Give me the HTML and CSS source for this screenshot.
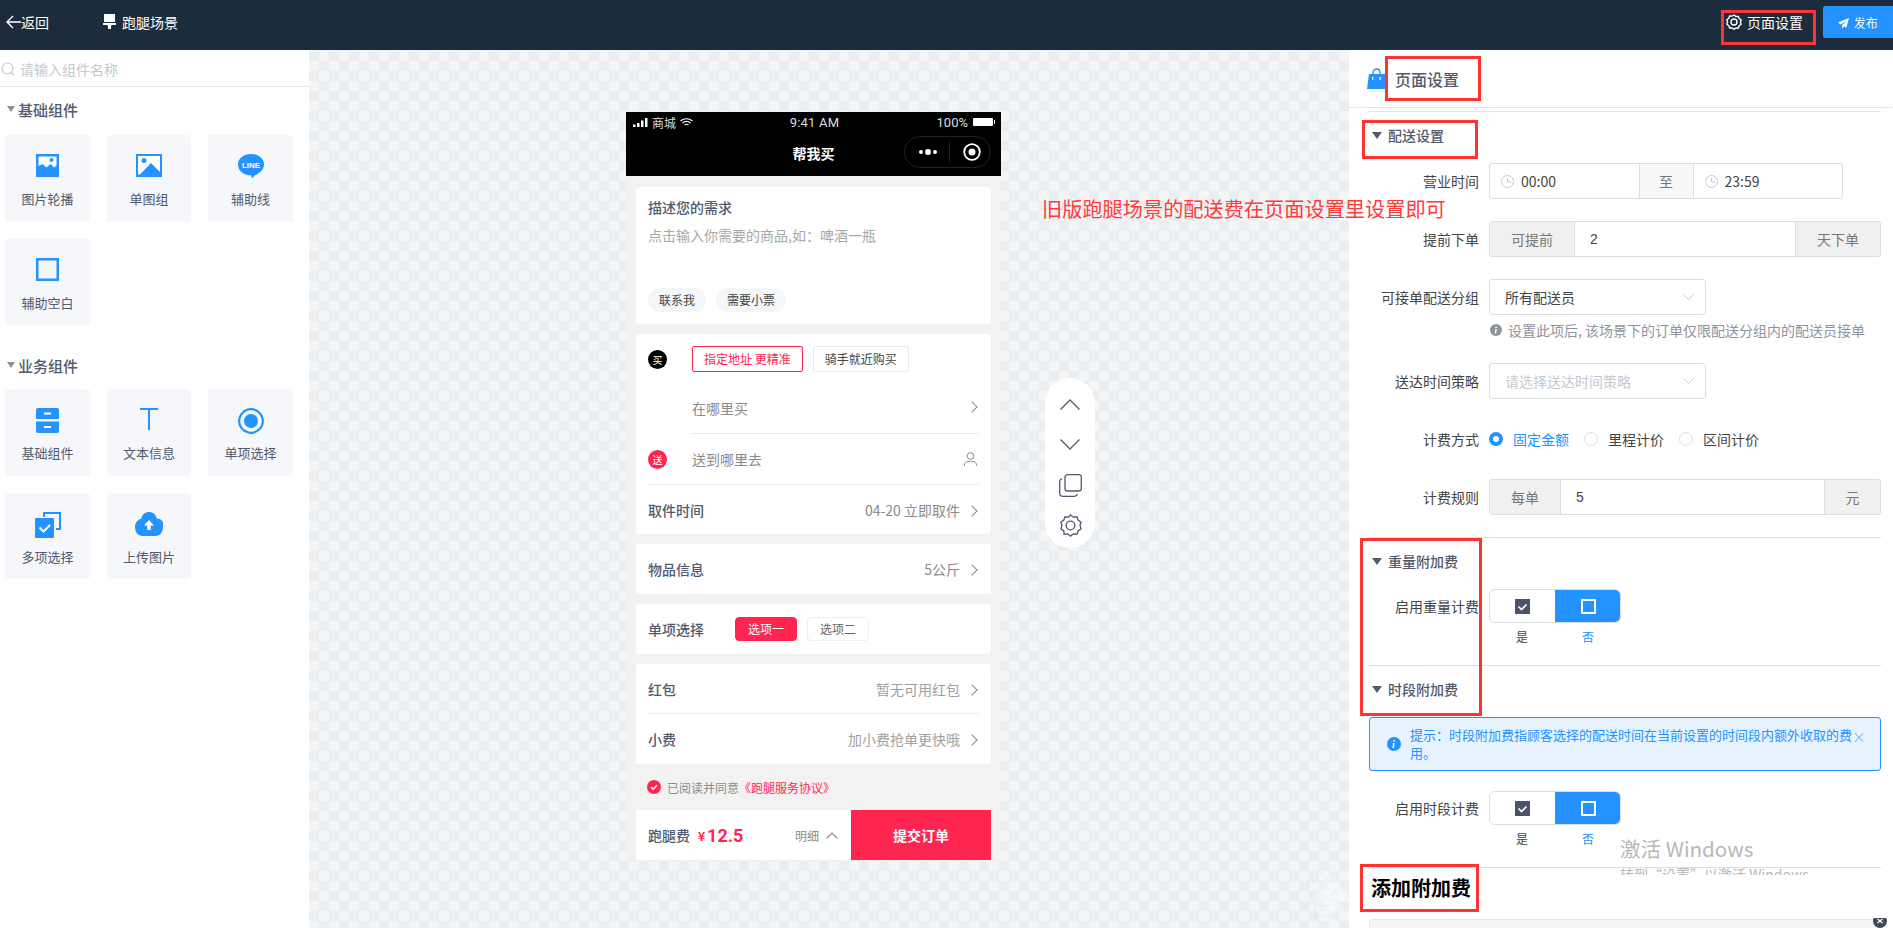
FILE: index.html

```html
<!DOCTYPE html>
<html lang="zh-CN">
<head>
  <meta charset="UTF-8">
  <title>跑腿场景 - 页面设置</title>
  <link rel="stylesheet" href="styles.css">
</head>
<body>
  <header class="topbar">
    <div class="back">
      <svg width="15" height="14" viewBox="0 0 15 14" fill="none" stroke="#fff" stroke-width="1.4"><path d="M7 1 1 7l6 6M1 7h14"/></svg>
      <span>返回</span>
    </div>
    <div class="scene">
      <svg width="13" height="16" viewBox="0 0 13 16" fill="#fff"><path d="M1 0h11v8H1zM0 9h13v2H9l-1 1v3H5v-3l-1-1H0z"/></svg>
      <span>跑腿场景</span>
    </div>
    <div class="topbar-right">
      <div class="page-set">
        <svg width="16" height="16" viewBox="0 0 24 24" fill="none" stroke="#fff" stroke-width="2"><path d="M12 1.500l3 2.200 3.600-.2 1.200 3.400 3 2.100L21.700 12l1.100 3.500-3 2.100-1.200 3.400-3.600-.2-3 2.200-3-2.200-3.600.2-1.200-3.400-3-2.100L2.300 12 1.200 8.500l3-2.100 1.200-3.400 3.600.2z"/><circle cx="12" cy="12" r="4.500"/></svg>
        <span>页面设置</span>
      </div>
      <button class="publish">
        <svg width="11" height="11" viewBox="0 0 12 12" fill="#fff"><path d="M12 0 0 5l3 2 6-4-4.500 5v4l2-3 2.500 1.500z"/></svg>
        发布
      </button>
    </div>
  </header>

  <main class="main">
    <aside class="left">
      <div class="search">
        <svg width="14" height="14" viewBox="0 0 14 14" fill="none" stroke="#c5c8ce" stroke-width="1.200"><circle cx="6.500" cy="6.500" r="5.500"/><path d="m10.500 10.500 2.500 2.500"/></svg>
        <span>请输入组件名称</span>
      </div>

      <h3 class="group-title first"><i class="tri grey"></i>基础组件</h3>
      <div class="comp-grid">
        <div class="comp">
          <svg width="23" height="23" viewBox="0 0 23 23"><path fill="#2492ff" d="M0 0h23v23H0z"/><path fill="#fff" d="M2.500 2.500h18v9l-2.500 2-3.500-3.500-4 3.500-4-3.500-4 2z"/><circle cx="15.500" cy="6" r="2" fill="#2492ff"/></svg>
          <span>图片轮播</span>
        </div>
        <div class="comp">
          <svg width="26" height="23" viewBox="0 0 26 23"><path fill="#2492ff" d="M0 0h26v23H0z"/><path fill="#fff" d="M2 2h22v16l-9-9-4 1-9 9z"/><path fill="#fff" d="M2 19 13 8l1.500 1.500L4 20.500H2z"/><circle cx="8" cy="6.500" r="2.500" fill="#2492ff"/></svg>
          <span>单图组</span>
        </div>
        <div class="comp">
          <svg width="26" height="25" viewBox="0 0 26 25"><path fill="#2492ff" d="M13 0c7.200 0 13 4.600 13 10.400 0 5.600-5.500 9.200-9.500 11.200l-2.500 3-1-3.300C6 21.300 0 16.800 0 10.400 0 4.600 5.800 0 13 0z"/><text x="13" y="14" class="line-txt">LINE</text></svg>
          <span>辅助线</span>
        </div>
        <div class="comp">
          <svg width="23" height="23" viewBox="0 0 23 23" fill="none" stroke="#2492ff" stroke-width="2.500"><path d="M1.250 1.250h20.500v20.500H1.250z"/></svg>
          <span>辅助空白</span>
        </div>
      </div>

      <h3 class="group-title"><i class="tri grey"></i>业务组件</h3>
      <div class="comp-grid">
        <div class="comp">
          <svg width="23" height="25" viewBox="0 0 23 25" fill="#2492ff"><path d="M2 0h19a2 2 0 0 1 2 2v9H0V2a2 2 0 0 1 2-2zM0 13.500h23V23a2 2 0 0 1-2 2H2a2 2 0 0 1-2-2z"/><path fill="#fff" d="M8 4.500h7v2H8zM8 18h7v2H8z"/></svg>
          <span>基础组件</span>
        </div>
        <div class="comp">
          <svg width="18" height="22" viewBox="0 0 18 22" fill="#2492ff"><path d="M0 0h18v2H10v20H8V2H0z"/></svg>
          <span>文本信息</span>
        </div>
        <div class="comp">
          <svg width="26" height="26" viewBox="0 0 26 26"><circle cx="13" cy="13" r="11.800" fill="none" stroke="#2492ff" stroke-width="2.200"/><circle cx="13" cy="13" r="7" fill="#2492ff"/></svg>
          <span>单项选择</span>
        </div>
        <div class="comp">
          <svg width="26" height="26" viewBox="0 0 26 26" fill="#2492ff"><path d="M8 0h18v18h-5v-2h3V2H10v3H8z"/><path d="M1 6h17a1 1 0 0 1 1 1v18a1 1 0 0 1-1 1H1a1 1 0 0 1-1-1V7a1 1 0 0 1 1-1z"/><path d="m4.500 15.500 4 4 6.500-6.500" fill="none" stroke="#fff" stroke-width="2"/></svg>
          <span>多项选择</span>
        </div>
        <div class="comp">
          <svg width="28" height="24" viewBox="0 0 28 24" fill="#2492ff"><path d="M14 0c4 0 7 2.500 7.600 6.400A6.500 6.500 0 0 1 28 15c0 5-3 9-7.500 9h-13C3 24 0 20 0 15c0-3.800 2.500-7.500 6.400-8.600C7 2.500 10 0 14 0z"/><path d="M14 8l5 5.500h-3.200V18h-3.600v-4.500H9z" fill="#fff"/></svg>
          <span>上传图片</span>
        </div>
      </div>
    </aside>

    <section class="canvas">
      <div class="phone">
        <div class="phone-head">
          <div class="status">
            <div class="status-left">
              <svg width="15" height="9" viewBox="0 0 15 9" fill="#fff"><path d="M0 6.500h2.500V9H0zM4 5h2.500v4H4zM8 2.500h2.500V9H8zM12 0h2.500v9H12z"/></svg>
              <span>商城</span>
              <svg width="13" height="9" viewBox="0 0 13 9" fill="none" stroke="#fff" stroke-width="1.200"><path d="M.5 3c3.500-3 8.500-3 12 0M2.500 5c2.500-2 5.500-2 8 0M4.500 7c1.200-.9 2.800-.9 4 0"/></svg>
            </div>
            <div class="status-time">9:41 AM</div>
            <div class="status-right">
              <span>100%</span>
              <i class="battery"></i>
            </div>
          </div>
          <div class="nav">
            <div class="nav-title">帮我买</div>
            <div class="capsule">
              <svg width="20" height="6" viewBox="0 0 20 6" fill="#fff"><circle cx="3" cy="3" r="2"/><circle cx="10" cy="3" r="3"/><circle cx="17" cy="3" r="2"/></svg>
              <i class="capsule-line"></i>
              <svg width="18" height="18" viewBox="0 0 18 18"><circle cx="9" cy="9" r="7.800" fill="none" stroke="#fff" stroke-width="1.800"/><circle cx="9" cy="9" r="3.500" fill="#fff"/></svg>
            </div>
          </div>
        </div>

        <div class="phone-body">
          <div class="card need">
            <div class="need-title">描述您的需求</div>
            <div class="need-hint">点击输入你需要的商品,如：啤酒一瓶</div>
            <div class="chips">
              <span class="chip">联系我</span>
              <span class="chip">需要小票</span>
            </div>
          </div>

          <div class="card addr">
            <div class="addr-top">
              <span class="badge black">买</span>
              <span class="tag red">指定地址 更精准</span>
              <span class="tag">骑手就近购买</span>
            </div>
            <div class="addr-row">
              <span class="muted">在哪里买</span>
              <i class="arrow"></i>
            </div>
            <div class="addr-send">
              <span class="badge pink">送</span>
              <span class="muted">送到哪里去</span>
              <svg width="13" height="14" viewBox="0 0 13 14" fill="none" stroke="#8a8a8a"><circle cx="6.500" cy="4" r="3.300"/><path d="M.5 14v-1.500c0-2 2-3.200 6-3.200s6 1.200 6 3.200V14"/></svg>
            </div>
            <div class="row last">
              <b>取件时间</b>
              <span class="row-val">04-20 立即取件<i class="arrow"></i></span>
            </div>
          </div>

          <div class="card plain square">
            <div class="row">
              <b>物品信息</b>
              <span class="row-val">5公斤<i class="arrow"></i></span>
            </div>
          </div>

          <div class="card plain">
            <div class="row choose">
              <b>单项选择</b>
              <span class="opt on">选项一</span>
              <span class="opt">选项二</span>
            </div>
          </div>

          <div class="card money">
            <div class="row line">
              <b>红包</b>
              <span class="row-val light">暂无可用红包<i class="arrow"></i></span>
            </div>
            <div class="row">
              <b>小费</b>
              <span class="row-val light">加小费抢单更快哦<i class="arrow"></i></span>
            </div>
          </div>

          <div class="agree">
            <svg width="14" height="14" viewBox="0 0 14 14"><circle cx="7" cy="7" r="7" fill="#ff2551"/><path d="m4 7 2.200 2.200L10 5.300" fill="none" stroke="#fff" stroke-width="1.500"/></svg>
            <span>已阅读并同意</span><span class="agree-link">《跑腿服务协议》</span>
          </div>

          <div class="pay">
            <div class="pay-left">
              <b>跑腿费</b>
              <span class="yen">¥</span><span class="price">12.5</span>
              <span class="detail">明细</span>
              <svg width="12" height="7" viewBox="0 0 12 7" fill="none" stroke="#8a8a8a" stroke-width="1.100"><path d="m.5 6.500 5.500-5.500 5.500 5.500"/></svg>
            </div>
            <div class="pay-btn">提交订单</div>
          </div>
        </div>
      </div>

      <div class="tools">
        <svg width="20" height="11" viewBox="0 0 20 11" fill="none" stroke="#515a6e" stroke-width="1.300"><path d="m.5 10.500 9.500-9.500 9.500 9.500"/></svg>
        <svg width="20" height="11" viewBox="0 0 20 11" fill="none" stroke="#515a6e" stroke-width="1.300"><path d="m.5.500 9.500 9.500 9.500-9.500"/></svg>
        <svg width="23" height="23" viewBox="0 0 23 23" fill="none" stroke="#515a6e" stroke-width="1.300"><rect x="6" y=".7" width="16.300" height="16.300" rx="2.500"/><path d="M3 4.500C1.500 5 .7 6 .7 7.500V19c0 2 1.300 3.300 3.300 3.300h11.500c1.500 0 2.500-.8 3-2.300"/></svg>
        <svg width="23" height="23" viewBox="0 0 24 24" fill="none" stroke="#515a6e" stroke-width="1.400"><path d="M12 1l3 2.300 3.700-.4 1.300 3.500 3 2.100L21.900 12l1.100 3.500-3 2.100-1.300 3.500-3.700-.4-3 2.300-3-2.300-3.700.4L5 17.600l-3-2.100L3.100 12 2 8.500l3-2.100 1.300-3.500 3.700.4z"/><circle cx="12" cy="12" r="4.500"/></svg>
      </div>
    </section>

    <aside class="right">
      <div class="right-head">
        <svg width="19" height="21" viewBox="0 0 19 21"><path fill="#2492ff" d="M2 6h17v15H0z"/><path fill="none" stroke="#2492ff" stroke-width="1.300" d="M6 6V4.500C6 2.500 7.500 1 9.500 1S13 2.500 13 4.500V6"/><path fill="#fff" d="M5 9h1.300v3H5zM12.500 9h1.300v3h-1.300z"/></svg>
        <span>页面设置</span>
      </div>
      <div class="right-body">
        <h4 class="sec-title"><i class="tri"></i>配送设置</h4>

        <div class="field">
          <label>营业时间</label>
          <div class="group narrow">
            <div class="time">
              <svg width="13" height="13" viewBox="0 0 13 13" fill="none" stroke="#c5c8ce"><circle cx="6.500" cy="6.500" r="6"/><path d="M6.500 3V7H10"/></svg>
              <span>00:00</span>
            </div>
            <div class="addon mid">至</div>
            <div class="time">
              <svg width="13" height="13" viewBox="0 0 13 13" fill="none" stroke="#c5c8ce"><circle cx="6.500" cy="6.500" r="6"/><path d="M6.500 3V7H10"/></svg>
              <span>23:59</span>
            </div>
          </div>
        </div>

        <div class="field">
          <label>提前下单</label>
          <div class="group">
            <div class="addon w84">可提前</div>
            <div class="group-input">2</div>
            <div class="addon w84">天下单</div>
          </div>
        </div>

        <div class="field short-gap">
          <label>可接单配送分组</label>
          <div class="select">
            <span>所有配送员</span>
            <svg width="11" height="6" viewBox="0 0 11 6" fill="none" stroke="#c5c8ce"><path d="m.5.500 5 5 5-5"/></svg>
          </div>
        </div>
        <div class="hint">
          <svg width="12" height="12" viewBox="0 0 12 12"><circle cx="6" cy="6" r="6" fill="#8f939c"/><path d="M5.400 2.500h1.500v1.400H5.400zM5.300 5h1.500l-.6 4.500H4.800z" fill="#fff"/></svg>
          <span>设置此项后, 该场景下的订单仅限配送分组内的配送员接单</span>
        </div>

        <div class="field before-radios">
          <label>送达时间策略</label>
          <div class="select">
            <span class="ph">请选择送达时间策略</span>
            <svg width="11" height="6" viewBox="0 0 11 6" fill="none" stroke="#c5c8ce"><path d="m.5.500 5 5 5-5"/></svg>
          </div>
        </div>

        <div class="field radios">
          <label>计费方式</label>
          <div class="radio-list">
            <span class="radio on"><i></i>固定金额</span>
            <span class="radio"><i></i>里程计价</span>
            <span class="radio"><i></i>区间计价</span>
          </div>
        </div>

        <div class="field">
          <label>计费规则</label>
          <div class="group">
            <div class="addon w70">每单</div>
            <div class="group-input">5</div>
            <div class="addon w55">元</div>
          </div>
        </div>

        <hr class="rule">
        <h4 class="sec-title"><i class="tri"></i>重量附加费</h4>
        <div class="field toggle-field">
          <label>启用重量计费</label>
          <div class="toggle-wrap">
            <div class="toggle">
              <div class="toggle-yes"><svg width="15" height="15" viewBox="0 0 15 15"><rect width="15" height="15" fill="#4b5368"/><path d="m3.500 7.500 3 3 5-5" fill="none" stroke="#fff" stroke-width="1.700"/></svg></div>
              <div class="toggle-no"><i></i></div>
            </div>
            <div class="toggle-text"><span>是</span><span class="blue">否</span></div>
          </div>
        </div>

        <hr class="rule spaced">
        <h4 class="sec-title"><i class="tri"></i>时段附加费</h4>
        <div class="alert">
          <svg width="14" height="14" viewBox="0 0 14 14"><circle cx="7" cy="7" r="7" fill="#2492ff"/><path d="M6.400 3h1.700v1.600H6.400zM6.100 6h1.700l-.8 5H5.300z" fill="#fff"/></svg>
          <p>提示：时段附加费指顾客选择的配送时间在当前设置的时间段内额外收取的费用。</p>
          <span class="alert-x">×</span>
        </div>
        <div class="field toggle-field">
          <label>启用时段计费</label>
          <div class="toggle-wrap">
            <div class="toggle">
              <div class="toggle-yes"><svg width="15" height="15" viewBox="0 0 15 15"><rect width="15" height="15" fill="#4b5368"/><path d="m3.500 7.500 3 3 5-5" fill="none" stroke="#fff" stroke-width="1.700"/></svg></div>
              <div class="toggle-no"><i></i></div>
            </div>
            <div class="toggle-text"><span>是</span><span class="blue">否</span></div>
          </div>
        </div>

        <hr class="rule spaced">
        <h2 class="add-title">添加附加费</h2>
        <div class="add-box"></div>
      </div>
    </aside>
  </main>

  <!-- 截图上的红色标注 -->
  <div class="mark mark-top"></div>
  <div class="mark mark-title"></div>
  <div class="mark mark-sec"></div>
  <div class="mark mark-tall"></div>
  <div class="mark mark-add"></div>
  <div class="note">旧版跑腿场景的配送费在页面设置里设置即可</div>

  <div class="winmark">
    <div class="win-big">激活 Windows</div>
    <div class="win-small">转到“设置”以激活 Windows</div>
  </div>
  <div class="ghost">客</div>
  <svg class="add-close" width="14" height="10" viewBox="0 4 14 10"><circle cx="7" cy="7" r="7" fill="#3f4a5a"/><path d="m4.500 5 5 4M9.500 5l-5 4" stroke="#fff" stroke-width="1.300"/></svg>
</body>
</html>
```

FILE: styles.css

```css
* {
  box-sizing: border-box;
}
html, body {
  margin: 0;
  height: 100%;
}
body {
  position: relative;
  width: 1893px;
  height: 928px;
  overflow: hidden;
  font-family: "Noto Sans CJK SC", "Noto Sans", sans-serif;
  font-size: 13px;
  color: #515a6e;
  background: #fff;
}
h2, h3, h4, p {
  margin: 0;
}
i {
  font-style: normal;
}

/* top bar */
.topbar {
  height: 50px;
  display: flex;
  align-items: center;
  background: #1d2c3d;
  color: #fff;
}
.back {
  display: flex;
  align-items: center;
  width: 103px;
  padding-left: 6px;
  font-size: 14px;
  margin-top: -7px;
}
.scene {
  display: flex;
  align-items: center;
  gap: 6px;
  font-size: 14px;
  margin-top: -7px;
}
.topbar-right {
  margin-left: auto;
  display: flex;
  align-items: flex-start;
  height: 50px;
  padding-top: 6px;
}
.page-set {
  display: flex;
  align-items: center;
  gap: 5px;
  height: 32px;
  margin-right: 20px;
  font-size: 14px;
}
.publish {
  width: 70px;
  height: 32px;
  border: none;
  border-radius: 2px 0 0 2px;
  background: #2492ff;
  color: #fff;
  font: inherit;
  font-size: 12px;
  padding: 0;
}
.publish svg {
  margin-right: 2px;
  vertical-align: -1px;
}

.main {
  display: flex;
  height: 878px;
}

/* left panel */
.left {
  width: 309px;
  flex: none;
  background: #fff;
}
.search {
  height: 37px;
  display: flex;
  align-items: center;
  gap: 5px;
  padding: 1px 0 0 1px;
  border-bottom: 1px solid #e3e5ec;
  color: #c5c8ce;
  font-size: 14px;
}
.group-title {
  display: flex;
  align-items: center;
  gap: 3px;
  height: 22px;
  margin: 29px 0 13px 7px;
  font-size: 15px;
  font-weight: 500;
  color: #515a6e;
}
.group-title.first {
  margin-top: 11px;
  margin-bottom: 15px;
}
.tri {
  width: 0;
  height: 0;
  border-left: 5px solid transparent;
  border-right: 5px solid transparent;
  border-top: 7px solid #515a6e;
}
.tri.grey {
  border-left-width: 4.500px;
  border-right-width: 4.500px;
  border-top: 6px solid #8c8f99;
}
.comp-grid {
  display: grid;
  grid-template-columns: 85px 84px 85px;
  grid-auto-rows: 86.500px;
  gap: 17px;
  padding-left: 5px;
}
.comp {
  display: flex;
  flex-direction: column;
  align-items: center;
  background: #f5f7fb;
  border-radius: 3px;
  position: relative;
  padding-top: 19px;
  color: #515a6e;
}
.comp span {
  position: absolute;
  top: 54px;
  line-height: 20px;
}
.line-txt {
  font-family: "Liberation Sans", sans-serif;
  font-size: 8px;
  font-weight: 700;
  fill: #fff;
  text-anchor: middle;
}

/* canvas */
.canvas {
  flex: 1;
  display: flex;
  align-items: flex-start;
  padding: 62px 0 0 317px;
  background-color: #f5f5f5;
  background-image: conic-gradient(#f5f5f5 25%, #e9eef3 0 50%, #f5f5f5 0 75%, #e9eef3 0);
  background-size: 20px 20px;
  background-position: 0 1px;
}
.phone {
  width: 375px;
  height: 748px;
  flex: none;
  background: #f2f2f2;
}
.phone-head {
  height: 64px;
  background: #000;
  color: #fff;
}
.status {
  display: flex;
  align-items: center;
  justify-content: space-between;
  height: 20px;
  padding: 0 7px;
  font-size: 12px;
  color: #ddd;
}
.status-left {
  display: flex;
  align-items: center;
  gap: 4px;
  width: 100px;
}
.status-time {
  font-family: "Roboto", sans-serif;
  font-size: 13px;
  letter-spacing: .2px;
  margin-left: 2px;
}
.status-right {
  display: flex;
  align-items: center;
  justify-content: flex-end;
  gap: 5px;
  width: 100px;
  padding-right: 1px;
  font-family: "Roboto", sans-serif;
  font-size: 13px;
}
.battery {
  position: relative;
  width: 20px;
  height: 8px;
  background: #fff;
  border-radius: 1px;
}
.battery::after {
  content: "";
  position: absolute;
  left: 21px;
  top: 2px;
  width: 1px;
  height: 4px;
  background: #fff;
}
.nav {
  position: relative;
  height: 44px;
  display: flex;
  align-items: center;
  justify-content: center;
}
.nav-title {
  font-size: 14px;
  font-weight: 700;
  margin-top: -2px;
}
.capsule {
  position: absolute;
  right: 10px;
  top: 4px;
  width: 87px;
  height: 32px;
  display: flex;
  align-items: center;
  border: 1px solid #222;
  border-radius: 16px;
  padding-left: 13px;
}
.capsule-line {
  width: 1px;
  height: 20px;
  background: #222;
  margin: 0 13px 0 11px;
}
.phone-body {
  padding: 11px 10px 0;
}
.card {
  width: 355px;
  background: #fff;
  border-radius: 4px;
  margin-bottom: 10px;
}
.need {
  height: 137px;
  padding: 10px 12px 0;
  position: relative;
}
.need-title {
  font-size: 14px;
  font-weight: 500;
  line-height: 20px;
}
.need-hint {
  margin-top: 8px;
  color: #a8a8a8;
  font-size: 14px;
  line-height: 20px;
}
.chips {
  position: absolute;
  left: 12px;
  bottom: 12px;
  display: flex;
  gap: 10px;
}
.chip {
  height: 24px;
  padding: 0 11px;
  line-height: 24px;
  border-radius: 12px;
  background: #f4f6f7;
  font-size: 12px;
  color: #444;
}
.addr {
  height: 200px;
  padding: 12px 12px 0;
}
.addr-top {
  display: flex;
  align-items: center;
  height: 26px;
}
.badge {
  width: 19px;
  height: 19px;
  margin-right: 25px;
  flex: none;
  border-radius: 50%;
  color: #fff;
  font-size: 10px;
  line-height: 19px;
  text-align: center;
}
.badge.black {
  background: #000;
}
.badge.pink {
  background: #ff2551;
}
.tag {
  height: 26px;
  padding: 0 11px;
  margin-right: 10px;
  line-height: 24px;
  border: 1px solid #e9eaef;
  border-radius: 2px;
  font-size: 12px;
  color: #444;
}
.tag.red {
  border-color: #ff2551;
  color: #ff2551;
}
.muted {
  color: #8a8a8a;
  font-size: 14px;
}
.arrow {
  display: inline-block;
  width: 8px;
  height: 8px;
  margin: 0 3px 1px 8px;
  border-top: 1px solid #8a8a8a;
  border-right: 1px solid #8a8a8a;
  transform: rotate(45deg);
}
.addr-row {
  height: 62px;
  margin-left: 44px;
  padding-top: 10px;
  display: flex;
  align-items: center;
  justify-content: space-between;
  border-bottom: 1px solid #e9eaef;
}
.addr-send {
  height: 51px;
  display: flex;
  align-items: center;
  border-bottom: 1px solid #e9eaef;
}
.addr-send svg {
  margin-left: auto;
  margin-right: 2px;
}
.row {
  height: 50px;
  display: flex;
  align-items: center;
  justify-content: space-between;
  font-size: 14px;
}
.row.last {
  height: 49px;
}
.row b {
  font-weight: 500;
}
.row-val {
  color: #8a8a8a;
}
.row-val.light {
  color: #a0a0a0;
}
.plain {
  padding: 0 12px;
  height: 50px;
}
.plain.square {
  border-radius: 0;
}
.choose {
  justify-content: flex-start;
}
.choose b {
  margin-right: 31px;
}
.opt {
  width: 62px;
  height: 24px;
  line-height: 22px;
  margin-right: 10px;
  text-align: center;
  border: 1px solid #eceef2;
  border-radius: 4px;
  font-size: 12px;
  color: #666;
}
.opt.on {
  background: #ff2551;
  border-color: #ff2551;
  color: #fff;
}
.money {
  padding: 0 12px;
  height: 100px;
  margin-bottom: 0;
  border-radius: 4px 4px 0 0;
}
.row.line {
  border-bottom: 1px solid #eceef2;
}
.agree {
  height: 46px;
  display: flex;
  align-items: center;
  padding-left: 11px;
  font-size: 12px;
  color: #8a8a8a;
}
.agree svg {
  margin-right: 6px;
}
.agree-link {
  color: #ff2551;
}
.pay {
  display: flex;
  height: 50px;
  background: #fff;
}
.pay-left {
  width: 215px;
  display: flex;
  align-items: center;
  padding-left: 12px;
}
.pay-left b {
  font-weight: 500;
  font-size: 14px;
}
.yen {
  margin-left: 8px;
  font-size: 12px;
  font-weight: 700;
  color: #ff2551;
}
.price {
  margin-left: 2px;
  font-family: "Roboto", sans-serif;
  font-size: 18px;
  font-weight: 700;
  color: #ff2551;
}
.detail {
  margin-left: auto;
  margin-right: 7px;
  color: #8a8a8a;
  font-size: 12px;
}
.pay-left svg {
  margin-right: 13px;
}
.pay-btn {
  flex: 1;
  background: #ff2551;
  color: #fff;
  font-size: 14px;
  font-weight: 700;
  line-height: 50px;
  text-align: center;
}
.tools {
  width: 50px;
  height: 170px;
  margin: 266px 0 0 44px;
  flex: none;
  display: flex;
  flex-direction: column;
  align-items: center;
  padding-top: 21px;
  background: #fff;
  border-radius: 25px;
}
.tools svg:nth-child(2) {
  margin-top: 29px;
}
.tools svg:nth-child(3) {
  margin-top: 24px;
}
.tools svg:nth-child(4) {
  margin-top: 17px;
}

/* right panel */
.right {
  width: 544px;
  flex: none;
  background: #fff;
  font-size: 14px;
}
.right-head {
  height: 58px;
  display: flex;
  align-items: center;
  padding-left: 18px;
  border-bottom: 1px solid #e3e5ec;
  font-size: 16px;
  font-weight: 500;
}
.right-head span {
  margin-left: 9px;
}
.right-body {
  width: 512px;
  margin: 3px 0 0 20px;
  border-top: 1px solid #e3e5ec;
}
.sec-title {
  display: flex;
  align-items: center;
  gap: 6px;
  height: 20px;
  margin: 13px 0 18px 3px;
  font-size: 14px;
  font-weight: 500;
  color: #515a6e;
}
.field {
  display: flex;
  align-items: center;
  min-height: 36px;
  margin-bottom: 22px;
}
.field label {
  width: 110px;
  flex: none;
  margin-right: 10px;
  text-align: right;
  color: #444;
}
.field.short-gap {
  margin-bottom: 5px;
}
.field.before-radios {
  margin-bottom: 30px;
}
.group {
  flex: 1;
  display: flex;
  height: 36px;
  border: 1px solid #dcdee2;
  border-radius: 3px;
  overflow: hidden;
}
.group.narrow {
  flex: none;
  width: 354px;
}
.time {
  flex: 1;
  display: flex;
  align-items: center;
  gap: 7px;
  padding-left: 11px;
  color: #444;
}
.addon {
  display: flex;
  align-items: center;
  justify-content: center;
  flex: none;
  background: #f0f0f0;
  color: #777;
}
.addon.mid {
  width: 55px;
  background: #f8f8f9;
  border-left: 1px solid #dcdee2;
  border-right: 1px solid #dcdee2;
}
.w84 {
  width: 84px;
}
.w70 {
  width: 70px;
}
.w55 {
  width: 55px;
}
.group-input {
  flex: 1;
  display: flex;
  align-items: center;
  padding-left: 15px;
  border-left: 1px solid #dcdee2;
  border-right: 1px solid #dcdee2;
  color: #444;
  font-family: "Liberation Sans", sans-serif;
}
.select {
  width: 217px;
  height: 36px;
  display: flex;
  align-items: center;
  justify-content: space-between;
  padding: 0 11px 0 15px;
  border: 1px solid #dcdee2;
  border-radius: 3px;
  color: #444;
}
.select .ph {
  color: #c5c8ce;
}
.hint {
  display: flex;
  align-items: center;
  gap: 6px;
  height: 20px;
  margin: 0 0 23px 121px;
  color: #8f939c;
  white-space: nowrap;
}
.radios {
  min-height: 20px;
  margin-bottom: 30px;
}
.radio-list {
  display: flex;
  gap: 15px;
}
.radio {
  display: flex;
  align-items: center;
  gap: 10px;
  color: #444;
}
.radio i {
  width: 14px;
  height: 14px;
  border: 1px solid #dcdee2;
  border-radius: 50%;
}
.radio.on {
  color: #2492ff;
}
.radio.on i {
  border: 4px solid #2492ff;
}
.rule {
  margin: 0;
  border: 0;
  border-top: 1px solid #dcdee2;
}
.rule.spaced {
  margin-top: 16px;
}
.toggle-field {
  align-items: flex-start;
  margin-bottom: 0;
}
.toggle-field label {
  line-height: 34px;
}
.toggle-wrap {
  width: 132px;
}
.toggle {
  display: flex;
  height: 34px;
  border: 1px solid #dcdee2;
  border-radius: 6px;
  overflow: hidden;
}
.toggle-yes {
  width: 65px;
  display: flex;
  align-items: center;
  justify-content: center;
}
.toggle-no {
  flex: 1;
  margin: -1px -1px -1px 0;
  display: flex;
  align-items: center;
  justify-content: center;
  background: #2492ff;
}
.toggle-no i {
  width: 15px;
  height: 15px;
  border: 2px solid #fff;
  border-radius: 1px;
}
.toggle-text {
  display: flex;
  height: 26px;
  align-items: center;
  font-size: 12px;
  color: #444;
}
.toggle-text span {
  width: 66px;
  text-align: center;
}
.toggle-text .blue {
  color: #2492ff;
}
.alert {
  position: relative;
  display: flex;
  align-items: center;
  gap: 9px;
  height: 54px;
  margin-bottom: 20px;
  padding-left: 17px;
  border: 1px solid #2492ff;
  border-radius: 3px;
  background: #e6f3ff;
  color: #2492ff;
}
.alert p {
  width: 445px;
  flex: none;
  font-size: 13px;
  line-height: 18px;
}
.alert svg {
  flex: none;
}
.alert-x {
  position: absolute;
  right: 14px;
  top: 8px;
  font-size: 14px;
  line-height: 20px;
  color: #8db9ea;
}
.add-title {
  margin: 7px 0 0 2px;
  font-size: 20px;
  font-weight: 700;
  line-height: 26px;
  color: #000;
}
.add-box {
  height: 20px;
  margin-top: 18px;
  background: #f4f5f7;
  border: 1px solid #e3e5ec;
  border-radius: 3px;
}

/* annotations */
.mark {
  position: absolute;
  border: 3px solid #ff3333;
}
.mark-top {
  left: 1721px;
  top: 10px;
  width: 95px;
  height: 35px;
}
.mark-title {
  left: 1385px;
  top: 56px;
  width: 96px;
  height: 45px;
}
.mark-sec {
  left: 1362px;
  top: 120px;
  width: 116px;
  height: 39px;
}
.mark-tall {
  left: 1360px;
  top: 538px;
  width: 122px;
  height: 178px;
}
.mark-add {
  left: 1360px;
  top: 864px;
  width: 119px;
  height: 48px;
}
.note {
  position: absolute;
  left: 1042px;
  top: 194px;
  font-size: 20.200px;
  line-height: 30px;
  color: #ff3b3b;
  white-space: nowrap;
}
.winmark {
  position: absolute;
  left: 1620px;
  top: 833px;
  color: #b8b8b8;
}
.win-big {
  font-size: 20.600px;
  line-height: 30px;
}
.win-small {
  height: 11px;
  margin-top: 1px;
  overflow: hidden;
  font-size: 14px;
  line-height: 20px;
}
.ghost {
  position: absolute;
  left: 1285px;
  top: 860px;
  width: 64px;
  height: 68px;
  padding-left: 18px;
  font-size: 46px;
  line-height: 68px;
  color: rgba(205, 212, 218, .14);
  background: radial-gradient(closest-side at 70% 55%, rgba(255, 255, 255, .75), rgba(255, 255, 255, 0));
}
.add-close {
  position: absolute;
  left: 1873px;
  top: 918px;
}
```
